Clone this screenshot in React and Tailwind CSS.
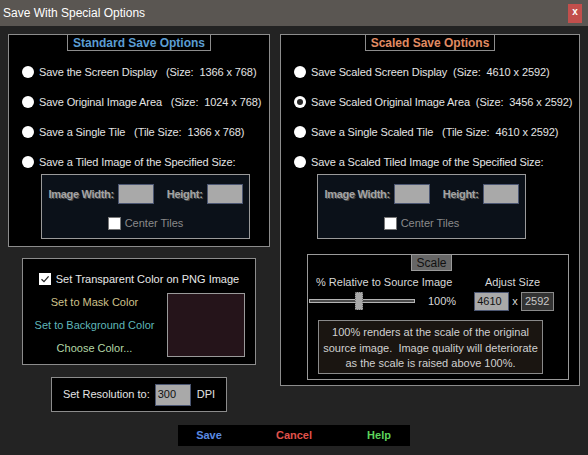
import React from 'react';

const Radio = ({ checked, label }) => (
  <div className="flex items-center h-[16px] gap-[5px]">
    <div className="w-[12px] h-[12px] rounded-full bg-white flex items-center justify-center">
      {checked && <div className="w-[6px] h-[6px] rounded-full bg-[#262626]" />}
    </div>
    <span className="whitespace-pre text-[11px] tracking-[-0.1px] text-[#e4e4e4]">{label}</span>
  </div>
);

const Legend = ({ children, color }) => (
  <div className={`self-center -mt-px h-[17px] px-[5px] border border-[#8c8c8c] bg-black flex items-center text-[12px] font-bold ${color}`}>
    {children}
  </div>
);

const Field = () => <div className="w-[36px] h-[20px] bg-[#a9a9a9] border border-[#4b5672]" />;

const TileBox = ({ offset }) => (
  <div className={`${offset} mt-[4px] w-[209px] h-[65px] border border-[#9a9a9a] bg-[#0b1119] flex flex-col items-center`}>
    <div className="mt-[9px] flex items-center">
      <span className="text-[11px] font-bold tracking-[-0.3px] text-[#a4a4a4] [text-shadow:1px_1px_0_#4a4a4a]">Image Width:</span>
      <div className="ml-[4px]"><Field /></div>
      <span className="ml-[13px] text-[11px] font-bold tracking-[-0.3px] text-[#a4a4a4] [text-shadow:1px_1px_0_#4a4a4a]">Height:</span>
      <div className="ml-[4px]"><Field /></div>
    </div>
    <div className="mt-[11px] flex items-center gap-[4px]">
      <div className="w-[13px] h-[13px] bg-white border border-[#777]" />
      <span className="text-[11px] text-[#8a8a8a]">Center Tiles</span>
    </div>
  </div>
);

export default function App() {
  return (
    <div className="w-[588px] h-[455px] overflow-hidden bg-[#232323] font-['Liberation_Sans',Arial,sans-serif] flex flex-col">
      <div className="h-[26px] bg-[#5a5652] flex items-center justify-between pl-[3px] pr-[6px]">
        <span className="text-[12px] text-white">Save With Special Options</span>
        <div className="w-[14px] h-[19px] bg-[#c24f4c] flex items-center justify-center text-white text-[10px] font-bold leading-none pb-[2px]">x</div>
      </div>

      <div className="flex px-[8px] pt-[8px] gap-[10px]">
        {/* left column */}
        <div className="w-[262px] flex flex-col items-center">
          <div className="w-full h-[213px] border border-[#8c8c8c] bg-black flex flex-col">
            <Legend color="text-[#5b9dd2]">Standard Save Options</Legend>
            <div className="mt-[13px] pl-[13px] flex flex-col gap-[14px]">
              <Radio label="Save the Screen Display   (Size:  1366 x 768)" />
              <Radio label="Save Original Image Area   (Size:  1024 x 768)" />
              <Radio label="Save a Single Tile   (Tile Size:  1366 x 768)" />
              <Radio label="Save a Tiled Image of the Specified Size:" />
            </div>
            <TileBox offset="ml-[32px]" />
          </div>

          <div className="mt-[11px] w-[234px] h-[107px] border border-[#8c8c8c] bg-black flex flex-col">
            <div className="mt-[13px] h-[14px] flex items-center justify-center gap-[5px]">
              <div className="w-[12px] h-[12px] bg-white flex items-center justify-center">
                <svg width="10" height="10" viewBox="0 0 10 10">
                  <path d="M1.5 5.2 L4 7.6 L8.6 2.4" fill="none" stroke="#222" strokeWidth="1.3" />
                </svg>
              </div>
              <span className="text-[11px] text-[#e8e8e8]">Set Transparent Color on PNG Image</span>
            </div>
            <div className="mt-[7px] flex">
              <div className="w-[143px] pt-[2px] flex flex-col items-center gap-[9px] text-[11px]">
                <span className="h-[14px] leading-[14px] text-[#cfc08b]">Set to Mask Color</span>
                <span className="h-[14px] leading-[14px] text-[#5fb6b9]">Set to Background Color</span>
                <span className="h-[14px] leading-[14px] text-[#b3d7a6]">Choose Color...</span>
              </div>
              <div className="ml-[1px] w-[78px] h-[64px] bg-[#25141a] border border-[#9a9a9a]" />
            </div>
          </div>

          <div className="mt-[12px] w-[176px] h-[35px] border border-[#8c8c8c] bg-black flex items-center justify-center">
            <span className="text-[11px] text-[#e4e4e4]">Set Resolution to:</span>
            <div className="ml-[5px] w-[36px] h-[22px] bg-[#a9a9a9] border border-[#4b5672] flex items-center pl-[2px] text-[11px] text-[#111]">300</div>
            <span className="ml-[6px] text-[11px] text-[#e4e4e4]">DPI</span>
          </div>
        </div>

        {/* right column */}
        <div className="w-[300px] h-[352px] border border-[#8c8c8c] bg-black flex flex-col">
          <Legend color="text-[#e08b63]">Scaled Save Options</Legend>
          <div className="mt-[13px] pl-[13px] flex flex-col gap-[14px]">
            <Radio label="Save Scaled Screen Display  (Size:  4610 x 2592)" />
            <Radio checked label="Save Scaled Original Image Area  (Size:  3456 x 2592)" />
            <Radio label="Save a Single Scaled Tile   (Tile Size:  4610 x 2592)" />
            <Radio label="Save a Scaled Tiled Image of the Specified Size:" />
          </div>
          <TileBox offset="ml-[36px]" />

          <div className="mt-[15px] ml-[26px] w-[262px] h-[126px] border border-[#9a9a9a] flex flex-col">
            <div className="ml-[103px] -mt-px w-[41px] h-[17px] bg-[#666] border border-[#9a9a9a] flex items-center justify-center text-[12px] text-[#111]">Scale</div>
            <div className="mt-[4px] h-[14px] flex items-center text-[11px] text-[#d8d8d8]">
              <span className="ml-[8px]">% Relative to Source Image</span>
              <span className="ml-auto mr-[28px]">Adjust Size</span>
            </div>
            <div className="mt-[3px] h-[18px] flex items-center">
              <div className="relative ml-[1px] w-[106px] h-[18px] flex items-center">
                <div className="w-full h-[4px] border border-[#b4b4b4] bg-[#4a4a4a]" />
                <div className="absolute left-[46px] top-0 w-[8px] h-[18px] bg-[#a8a8a8] border-x border-[#6a6a6a] border-y border-dotted" />
              </div>
              <span className="ml-[13px] text-[11px] text-[#d8d8d8]">100%</span>
              <div className="ml-[18px] w-[35px] h-[19px] bg-[#a9a9a9] border border-[#4b5672] flex items-center pl-[2px] text-[11px] text-[#111]">4610</div>
              <span className="mx-[3px] text-[11px] text-[#d8d8d8]">x</span>
              <div className="w-[33px] h-[19px] bg-[#333] border border-[#8a8a8a] flex items-center justify-center text-[11px] text-[#c8c8c8]">2592</div>
            </div>
            <div className="mt-[10px] ml-[10px] w-[225px] h-[54px] bg-[#1a1511] border border-[#8a8a8a] pt-[4px] flex flex-col items-center text-[11px] leading-[15.5px] text-[#d0d0d0]">
              <span className="whitespace-pre">100% renders at the scale of the original</span>
              <span className="whitespace-pre">source image.  Image quality will deteriorate</span>
              <span className="whitespace-pre">as the scale is raised above 100%.</span>
            </div>
          </div>
        </div>
      </div>

      <div className="mt-[13px] self-center w-[232px] h-[21px] bg-black flex items-center justify-center gap-[25px] text-[11px] font-bold">
        <span className="w-[60px] text-center text-[#5a8be3]">Save</span>
        <span className="w-[60px] text-center text-[#e0524b]">Cancel</span>
        <span className="w-[60px] text-center text-[#5cd45c]">Help</span>
      </div>
    </div>
  );
}
